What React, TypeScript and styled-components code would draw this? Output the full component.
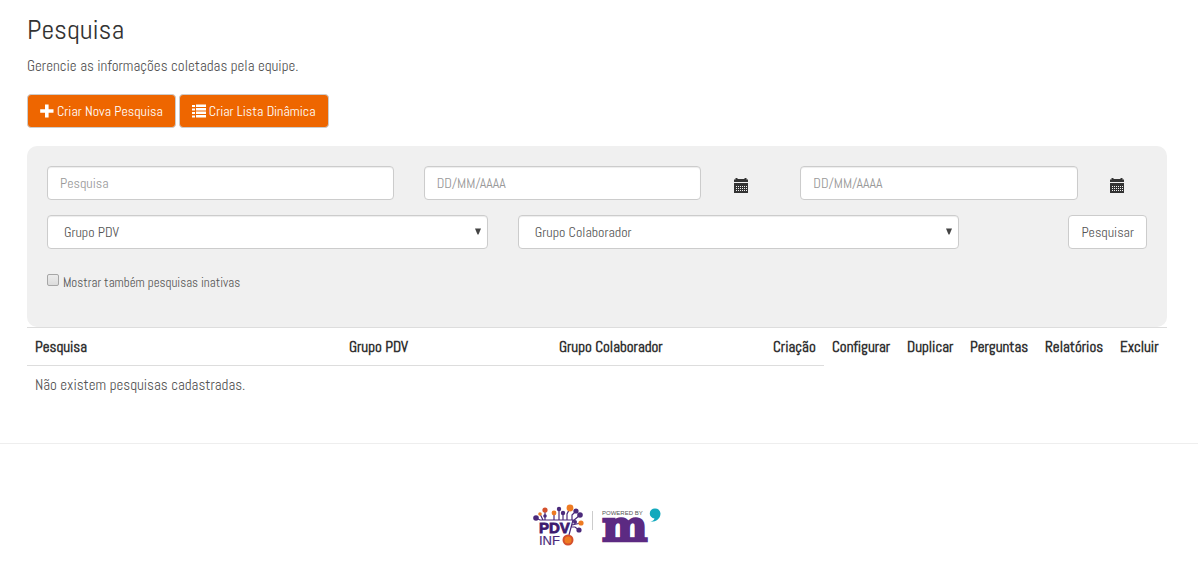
import React from 'react';
import styled, { createGlobalStyle } from 'styled-components';

const GlobalStyle = createGlobalStyle`
  *, *::before, *::after { box-sizing: border-box; }
  body {
    margin: 0;
    background: #fff;
    color: #555;
    font-family: Abel, "Liberation Sans Narrow", "Arial Narrow", "Roboto Condensed", "Liberation Sans", sans-serif;
    font-size: 15px;
    line-height: 20px;
  }
  button, input, select { font: inherit; }
`;

const Main = styled.main`
  padding: 13px 31px 0 27px;
`;

const Title = styled.h1`
  margin: 0 0 9px;
  color: #333;
  font-size: 28px;
  font-weight: 400;
  line-height: 34px;
`;

const Lead = styled.p`
  margin: 0 0 18px;
`;

const Actions = styled.div`
  display: flex;
  gap: 3px;
  margin-bottom: 18px;
`;

const Button = styled.button<{ $primary?: boolean }>`
  display: inline-flex;
  align-items: center;
  justify-content: center;
  gap: 3px;
  height: 34px;
  padding: 0 12px;
  border: 1px solid #ccc;
  border-radius: 4px;
  background: ${p => (p.$primary ? '#ee6600' : '#fff')};
  color: ${p => (p.$primary ? '#fff' : '#555')};
  font-size: 14px;
  white-space: nowrap;
  cursor: pointer;
`;

const Filters = styled.form`
  display: grid;
  grid-template-columns: repeat(12, minmax(0, 1fr));
  gap: 15px 30px;
  padding: 20px 20px 34px;
  border-radius: 10px;
  background: #f0f0f0;
`;

const Cell = styled.div<{ $span: number }>`
  grid-column: span ${p => p.$span};
`;

const DateCell = styled(Cell)`
  display: grid;
  grid-template-columns: 4fr 1fr;
`;

const ButtonCell = styled(Cell)`
  display: flex;
  justify-content: flex-end;
`;

const Input = styled.input`
  display: block;
  width: 100%;
  height: 34px;
  padding: 6px 12px;
  border: 1px solid #ccc;
  border-radius: 4px;
  background: #fff;
  box-shadow: inset 0 1px 1px rgba(0, 0, 0, 0.075);
  color: #555;
  font-size: 14px;
  &::placeholder { color: #999; opacity: 1; }
`;

const CalendarButton = styled.button`
  justify-self: center;
  align-self: center;
  display: flex;
  padding: 5px 0 0 10px;
  border: 0;
  background: none;
  color: #333;
  cursor: pointer;
`;

const SelectBox = styled.div`
  position: relative;
  svg {
    position: absolute;
    top: 13px;
    right: 7px;
    pointer-events: none;
  }
`;

const Select = styled.select`
  display: block;
  width: 100%;
  height: 34px;
  padding: 6px 16px;
  border: 1px solid #ccc;
  border-radius: 4px;
  background: #fff;
  box-shadow: inset 0 1px 1px rgba(0, 0, 0, 0.075);
  color: #555;
  font-size: 14px;
  line-height: 20px;
  appearance: none;
`;

const CheckLabel = styled.label`
  display: flex;
  align-items: center;
  gap: 4px;
  padding-top: 9px;
  font-size: 13px;
  line-height: 20px;
`;

const Checkbox = styled.input`
  appearance: none;
  width: 12px;
  height: 12px;
  margin: 0 0 6px;
  border: 1px solid #a6a6a6;
  border-radius: 2px;
  background: linear-gradient(#ececec, #dcdcdc);
  &:checked { background: #666; }
`;

const Table = styled.table`
  width: 100%;
  table-layout: fixed;
  border-collapse: collapse;
  th, td {
    padding: 9px 8px 8px;
    border-top: 1px solid #ddd;
    text-align: left;
    white-space: nowrap;
  }
  th { color: #333; }
`;

const Col = styled.col<{ $width?: number }>`
  width: ${p => (p.$width ? `${p.$width}px` : 'auto')};
`;

const Footer = styled.footer`
  display: flex;
  justify-content: center;
  margin-top: 40px;
  padding: 58px 4px 30px 0;
  border-top: 1px solid #eee;
`;

const PlusIcon = () => (
  <svg width="14" height="14" viewBox="0 0 14 14" aria-hidden="true">
    <path d="M5 .5h3.600v4.700H13.500v3.600H8.600V13.500H5V8.800H.2V5.200H5z" fill="currentColor" />
  </svg>
);

const ListIcon = () => (
  <svg width="14" height="14" viewBox="0 0 14 14" aria-hidden="true">
    <path d="M0 1h3v2H0zM4 .5h10v2.500H4zM0 4.500h3v2H0zM4 4h10v2.500H4zM0 8h3v2H0zM4 7.500h10V10H4zM0 11.500h3v2H0zM4 11h10v2.500H4z" fill="currentColor" />
  </svg>
);

const CalendarIcon = () => (
  <svg width="14" height="15" viewBox="0 0 14 15" aria-hidden="true">
    <path d="M0 1.500h1.500V0h2v1h7V0h2v1.500H14V4H0zM0 5h14v10H0z" fill="currentColor" />
    <path
      d="M2 8.500h1m1 0h1m1 0h1m1 0h1m1 0h1m1 0h1M2 10.500h1m1 0h1m1 0h1m1 0h1m1 0h1m1 0h1M2 12.500h1m1 0h1m1 0h1m1 0h1m1 0h1m1 0h1"
      stroke="#f0f0f0"
    />
  </svg>
);

const Arrow = () => (
  <svg width="6" height="7" viewBox="0 0 6 7" aria-hidden="true">
    <path d="M0 .5h6L3.500 6.500h-1z" fill="#444" />
  </svg>
);

const nodes: [number, number, number, string][] = [
  [4, 16, 2.8, '#4b2a7b'],
  [8, 12, 1.8, '#ee7b22'],
  [13, 8, 2.6, '#d4502c'],
  [13, 14, 1.8, '#4b2a7b'],
  [22, 11, 2.4, '#ee7b22'],
  [27, 7, 2.2, '#4b2a7b'],
  [31, 11, 2.2, '#4b2a7b'],
  [38, 6, 3.4, '#ee7b22'],
  [44, 9, 2.6, '#4b2a7b'],
  [48, 13, 2.8, '#4b2a7b'],
  [49, 21, 2.6, '#ee7b22'],
  [43, 20, 2, '#4b2a7b'],
  [47, 28, 2.6, '#4b2a7b'],
];

const Logo = () => (
  <svg width="130" height="46" viewBox="0 0 130 46" role="img" aria-label="PDV Info, powered by m">
    <path
      d="M4 16l4 2h33l-4 15M8 12l3 6M13 8v10M22 11v7M27 7v11M31 11v7M38 6l-3 6v6M44 9l-4 4v5M48 13l-7 6M49 21l-9 2M47 28l-4-3h-4"
      fill="none"
      stroke="#4b2a7b"
      strokeWidth="1.2"
    />
    {nodes.map(([x, y, r, fill]) => (
      <circle key={`${x}-${y}`} cx={x} cy={y} r={r} fill={fill} />
    ))}
    <text x="7" y="31" fontFamily="Liberation Sans, sans-serif" fontWeight="700" fontSize="15" fill="#3d1a6e" stroke="#3d1a6e" strokeWidth=".8">PDV</text>
    <text x="7" y="43" fontFamily="Liberation Sans, sans-serif" fontSize="13" fill="#4b2a7b" stroke="#4b2a7b" strokeWidth=".2">INF</text>
    <circle cx="36" cy="38" r="4.500" fill="#ee7b22" stroke="#d4502c" strokeWidth="2" />
    <path d="M60.500 9v19" stroke="#ccc" />
    <text x="70" y="13" fontFamily="Liberation Sans, sans-serif" fontSize="6" fill="#555">POWERED BY</text>
    <text x="70" y="39" fontFamily="DejaVu Serif, serif" fontWeight="700" fontSize="43" fill="#5c2a82" stroke="#5c2a82" strokeWidth="2.500">m</text>
    <path d="M123 6.500a5 5 0 1 0-.5 10c-.5 1.700-2 2.600-4 3.200 5.500.3 10-3 10-8.200A5.300 5.300 0 0 0 123 6.500z" fill="#12a9bd" />
  </svg>
);

const columns: { name: string; width?: number }[] = [
  { name: 'Pesquisa' },
  { name: 'Grupo PDV', width: 210 },
  { name: 'Grupo Colaborador', width: 214 },
  { name: 'Criação', width: 59 },
  { name: 'Configurar', width: 75 },
  { name: 'Duplicar', width: 63 },
  { name: 'Perguntas', width: 75 },
  { name: 'Relatórios', width: 75 },
  { name: 'Excluir', width: 55 },
];

const DateField = ({ label }: { label: string }) => (
  <DateCell $span={4}>
    <Input type="text" placeholder="DD/MM/AAAA" aria-label={label} />
    <CalendarButton type="button" aria-label={`Abrir calendário: ${label}`}>
      <CalendarIcon />
    </CalendarButton>
  </DateCell>
);

const GroupSelect = ({ label }: { label: string }) => (
  <Cell $span={5}>
    <SelectBox>
      <Select aria-label={label}>
        <option>{label}</option>
      </Select>
      <Arrow />
    </SelectBox>
  </Cell>
);

export default function App() {
  return (
    <>
      <GlobalStyle />
      <Main>
        <Title>Pesquisa</Title>
        <Lead>Gerencie as informações coletadas pela equipe.</Lead>
        <Actions>
          <Button type="button" $primary><PlusIcon />Criar Nova Pesquisa</Button>
          <Button type="button" $primary><ListIcon />Criar Lista Dinâmica</Button>
        </Actions>
        <Filters onSubmit={e => e.preventDefault()}>
          <Cell $span={4}>
            <Input type="text" placeholder="Pesquisa" aria-label="Pesquisa" />
          </Cell>
          <DateField label="Data inicial" />
          <DateField label="Data final" />
          <GroupSelect label="Grupo PDV" />
          <GroupSelect label="Grupo Colaborador" />
          <ButtonCell $span={2}>
            <Button type="submit">Pesquisar</Button>
          </ButtonCell>
          <Cell $span={12}>
            <CheckLabel>
              <Checkbox type="checkbox" />
              Mostrar também pesquisas inativas
            </CheckLabel>
          </Cell>
        </Filters>
        <Table>
          <colgroup>
            {columns.map(c => <Col key={c.name} $width={c.width} />)}
          </colgroup>
          <thead>
            <tr>{columns.map(c => <th key={c.name} scope="col">{c.name}</th>)}</tr>
          </thead>
          <tbody>
            <tr><td colSpan={4}>Não existem pesquisas cadastradas.</td></tr>
          </tbody>
        </Table>
      </Main>
      <Footer><Logo /></Footer>
    </>
  );
}
